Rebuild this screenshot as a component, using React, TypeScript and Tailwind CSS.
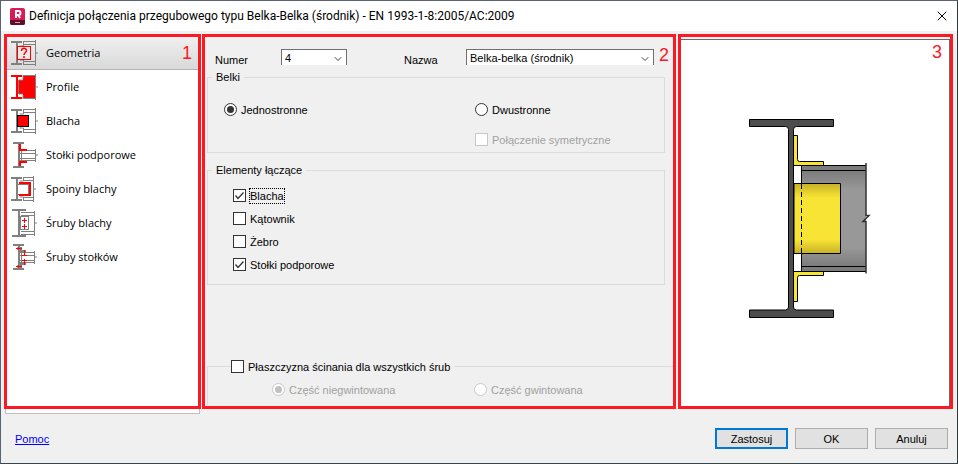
import React from "react";
import { ChevronDown, X } from "lucide-react";

const GRAY = "#808080";
const RED = "#ff0000";

type IconKind = "geometry" | "profile" | "plate" | "seats" | "welds" | "plateBolts" | "seatBolts";

const items: { label: string; icon: IconKind }[] = [
  { label: "Geometria", icon: "geometry" },
  { label: "Profile", icon: "profile" },
  { label: "Blacha", icon: "plate" },
  { label: "Stołki podporowe", icon: "seats" },
  { label: "Spoiny blachy", icon: "welds" },
  { label: "Śruby blachy", icon: "plateBolts" },
  { label: "Śruby stołków", icon: "seatBolts" },
];

// I-section of the supporting beam, seen from its end
const columnPaths: Record<IconKind, string> = {
  geometry: "M1 3h11M1 25h11M7 3v22",
  profile: "M1 3h11M1 25h11M7 3v22",
  plate: "M1 3h11M1 25h11M7 3v22",
  welds: "M1 3h11M1 25h11M7 3v22",
  plateBolts: "M2 1h14M2 27h14M9 1v26",
  seats: "M3 2h11M3 26h11M9 2v24",
  seatBolts: "M3 2h11M3 26h11M9 2v24",
};

// supported beam, seen from its side
const beamPaths: Record<IconKind, string> = {
  geometry: "M25.500 1v26M13 2.500h12M13 5.500h12M13 22.500h12M13 25.500h12M13.500 2v5h-4M13.500 26v-5h-4M26 14h2",
  profile: "M25.500 1v26M13 2.500h12M13 25.500h12M13 2v4M13 26v-4M9 7h4M9 21h4M8.500 7v14M26 14h2",
  plate: "M25.500 1v26M13 2.500h12M13 5.500h12M13 22.500h12M13 25.500h12M13.500 2v5h-4M13.500 26v-5h-4M26 14h2",
  welds: "M23.500 1v26M13 2.500h10M13 5.500h10M13 22.500h10M13 25.500h10M13.500 2v4h-4M13.500 26v-4h-4M24 14h2",
  plateBolts: "M24.500 2v25M11 3.500h13M11 6.500h13M11 22.500h13M11 25.500h13M25 14h2",
  seats: "M25.500 8v13M10 9.500h15M10 12.500h15M10 17.500h15M10 19.500h15M11.500 9v11M26 14h2",
  seatBolts: "M24.500 8v13M10 9.500h14M10 12.500h14M10 17.500h14M10 19.500h14M11.500 9v11M25 14h2",
};

const NavIcon: React.FC<{ kind: IconKind }> = ({ kind }) => (
  <svg width="28" height="28" viewBox="0 0 28 28" fill="none" aria-hidden="true">
    {kind === "profile" && <path d="M9 7h4V3h12v22H13v-4H9z" fill={RED} />}
    <path d={beamPaths[kind]} stroke={GRAY} />
    <path d={columnPaths[kind]} stroke={kind === "profile" ? RED : GRAY} strokeWidth="2" />
    {kind === "geometry" && (
      <>
        <rect x="7.500" y="7.500" width="13" height="13" fill="#e9e9e9" stroke={RED} />
        <path d="M11.500 12c0-3.500 5-3.500 5-.5 0 2-2.500 2-2.500 4.500M14 17v2" stroke={RED} strokeWidth="1.500" />
      </>
    )}
    {kind === "plate" && <rect x="7.500" y="8.500" width="11" height="11" fill={RED} stroke="#000" />}
    {kind === "seats" && <path d="M10 3v6h7M10 25v-4h7" stroke={RED} strokeWidth="2" />}
    {kind === "welds" && (
      <>
        <rect x="7.500" y="9.500" width="11" height="10" fill="#fff" stroke={GRAY} />
        <path d="M9 8h11v12H9" stroke={RED} strokeWidth="2" />
      </>
    )}
    {kind === "plateBolts" && (
      <>
        <rect x="10.500" y="7.500" width="8" height="13" fill="#fff" stroke={GRAY} />
        <path d="M12 11.500h5M14.500 9v5M12 17.500h5M14.500 15v5" stroke={RED} />
      </>
    )}
    {kind === "seatBolts" && (
      <>
        <path d="M11 4v4h5M11 25v-4h5" stroke={GRAY} strokeWidth="2" />
        <path d="M6 5.500h6M6 23.500h6M14.500 7v6M14.500 16v6M12 12.500h5M12 17.500h5M8 4v3M8 22v3" stroke={RED} />
      </>
    )}
  </svg>
);

const AppLogo: React.FC = () => (
  <svg width="15" height="17" viewBox="0 0 15 17" aria-hidden="true">
    <rect width="15" height="17" rx="2" fill="#d81b55" />
    <path d="M0 12h15v3a2 2 0 0 1-2 2H2a2 2 0 0 1-2-2z" fill="#5e0f2c" />
    <path d="M6 10V3h2.500a2 2 0 0 1 0 4H6M8 7l2 3" fill="none" stroke="#fff" strokeWidth="2" />
    <path d="M5 14.500h5" stroke="#d9a5b5" />
  </svg>
);

const JointDrawing: React.FC = () => (
  <svg width="124" height="204" viewBox="747 117 124 204" role="img" aria-label="Belka-belka (środnik)">
    <defs>
      <linearGradient id="beamWeb" x1="0" y1="0" x2="0" y2="1">
        <stop offset="0" stopColor="#7c7c7c" />
        <stop offset="0.2" stopColor="#989898" />
        <stop offset="0.8" stopColor="#989898" />
        <stop offset="1" stopColor="#7c7c7c" />
      </linearGradient>
      <linearGradient id="platePaint" x1="0" y1="0" x2="0" y2="1">
        <stop offset="0" stopColor="#c6b129" />
        <stop offset="0.2" stopColor="#f8e434" />
        <stop offset="0.8" stopColor="#f8e434" />
        <stop offset="1" stopColor="#c6b129" />
      </linearGradient>
    </defs>
    <path d="M801.500 165.500H866V271.500H801.500z" fill="#7c7c7c" />
    <path d="M801.500 170.500H866V266.500H801.500z" fill="url(#beamWeb)" />
    <path d="M801.500 165.500H866M801.500 170.500H866M801.500 266.500H866M801.500 271.500H866M801.500 165.500V271.500" stroke="#000" />
    <path d="M866 163V215.500h3l-6 6h3V273.500" fill="none" stroke="#333" strokeWidth="1.500" />
    <path d="M794 183.500h46.500v70H794z" fill="url(#platePaint)" stroke="#000" />
    <path d="M801.500 184V253" stroke="#000" strokeDasharray="5 3" />
    <g fill="#f8e434" stroke="#000">
      <path d="M793.500 135.500h4V159.500q0 2 2 2h24v4h-30z" />
      <path d="M793.500 301.500h4V277.500q0-2 2-2h24v-4h-30z" />
    </g>
    <path
      d="M749.500 119.500h84v7h-37q-3 0-3 3V307q0 3 3 3h37v7.500h-84V310h36q3 0 3-3V129.500q0-3-3-3h-36z"
      fill="#4d4d4d"
      stroke="#000"
    />
  </svg>
);

type ChoiceProps = {
  type: "radio" | "checkbox";
  label: string;
  name?: string;
  checked?: boolean;
  disabled?: boolean;
  focused?: boolean;
};

const Choice: React.FC<ChoiceProps> = ({ type, label, name, checked, disabled, focused }) => (
  <label className={`flex h-[23px] items-center gap-1 whitespace-nowrap ${disabled ? "text-[#a0a0a0]" : "text-black"}`}>
    <span className="relative size-[13px]">
      <input
        type={type}
        name={name}
        defaultChecked={checked}
        disabled={disabled}
        className={`peer block size-[13px] appearance-none border bg-white ${type === "radio" ? "rounded-full" : ""} ${
          disabled ? "border-[#c8c8c8]" : "border-[#333]"
        }`}
      />
      {type === "radio" ? (
        <span
          className={`pointer-events-none absolute inset-[3px] hidden rounded-full peer-checked:block ${
            disabled ? "bg-[#c0c0c0]" : "bg-[#333]"
          }`}
        />
      ) : (
        <svg viewBox="0 0 13 13" className="pointer-events-none absolute inset-0 hidden peer-checked:block" fill="none">
          <path d="M2.500 6.500 5 9.500 10.500 3.500" stroke="#333" strokeWidth="1.300" />
        </svg>
      )}
    </span>
    <span className={focused ? "outline-1 outline-dotted outline-black" : ""}>{label}</span>
  </label>
);

const Combo: React.FC<{ id: string; value: string; className: string }> = ({ id, value, className }) => (
  <div className={`relative h-4 ${className}`}>
    <select
      id={id}
      className="block h-4 w-full appearance-none border border-b-0 border-[#707070] bg-white pl-[3px] text-[11px] leading-4"
    >
      <option>{value}</option>
    </select>
    <ChevronDown size={12} strokeWidth={2} className="pointer-events-none absolute top-1 right-[3px] text-[#444]" />
  </div>
);

const Marker: React.FC<{ children: string; className: string }> = ({ children, className }) => (
  <span className={`absolute text-[18px] leading-5 text-[#fb1923] ${className}`}>{children}</span>
);

const dialogButton = "h-[21px] w-[73px] bg-[#e1e1e1] text-center";

const App: React.FC = () => {
  return (
    <div className="flex min-h-screen flex-col border border-t-[#5b6272] border-r-[#33383a] border-b-[#33474c] border-l-[#5b6272] bg-[#f0f0f0] font-['Liberation_Sans',sans-serif] text-[11px] leading-[14px] text-black">
      <header className="flex h-[30px] items-center bg-white pr-[7px] pl-[9px]">
        <AppLogo />
        <h1 className="ml-1 flex-1 font-['Roboto',sans-serif] text-[12px]">
          Definicja połączenia przegubowego typu Belka-Belka (środnik) - EN 1993-1-8:2005/AC:2009
        </h1>
        <button type="button" aria-label="Zamknij">
          <X size={16} strokeWidth={1.5} />
        </button>
      </header>

      <main className="flex flex-1 pt-[3px] pr-1 pl-[3px]">
        <div className="flex w-[197px] flex-col">
          <nav className="relative flex-1 border-[3px] border-[#fb1923] bg-white font-['Open_Sans',sans-serif] text-[11px]">
            <ul>
              {items.map((item, index) => (
                <li key={item.label}>
                  <a
                    href={`#${item.icon}`}
                    className={`flex items-center gap-2 pl-[3px] ${
                      index === 0 ? "h-[33px] border-b border-[#b4b4b4] bg-linear-to-b from-[#f0f0f0] to-[#d9d9d9]" : "h-[34px]"
                    }`}
                  >
                    <NavIcon kind={item.icon} />
                    {item.label}
                  </a>
                </li>
              ))}
            </ul>
            <Marker className="top-[6px] right-[6px] font-['Liberation_Sans',sans-serif]">1</Marker>
          </nav>
          <div className="mx-px h-[5px] border border-t-0 border-[#c0c0c0] bg-white" />
        </div>

        <section className="relative mb-[5px] ml-px flex flex-[466] flex-col border-[3px] border-[#fb1923] pt-3 pl-0.5">
          <div className="flex h-[21px] items-start pr-[19px] pl-2">
            <label htmlFor="number" className="w-[66px] pt-1">
              Numer
            </label>
            <Combo id="number" value="4" className="w-[66px]" />
            <label htmlFor="name" className="ml-[57px] w-[62px] pt-1">
              Nazwa
            </label>
            <Combo id="name" value="Belka-belka (środnik)" className="flex-1" />
          </div>

          <fieldset className="mr-2 h-[83px] border border-[#dcdcdc]">
            <legend className="ml-1 px-1">Belki</legend>
            <div className="grid grid-cols-[251px_1fr] gap-y-[7px] pt-[14px] pl-4">
              <Choice type="radio" name="sides" label="Jednostronne" checked />
              <Choice type="radio" name="sides" label="Dwustronne" />
              <div className="col-start-2">
                <Choice type="checkbox" label="Połączenie symetryczne" disabled />
              </div>
            </div>
          </fieldset>

          <fieldset className="mt-[10px] mr-2 h-[122px] border border-[#dcdcdc]">
            <legend className="ml-1 px-1">Elementy łączące</legend>
            <div className="pt-[7px] pl-[25px]">
              <Choice type="checkbox" label="Blacha" checked focused />
              <Choice type="checkbox" label="Kątownik" />
              <Choice type="checkbox" label="Żebro" />
              <Choice type="checkbox" label="Stołki podporowe" checked />
            </div>
          </fieldset>

          <fieldset className="mt-auto border border-r-0 border-b-0 border-[#dcdcdc]">
            <legend className="ml-[23px] pr-1">
              <Choice type="checkbox" label="Płaszczyzna ścinania dla wszystkich śrub" />
            </legend>
            <div className="grid grid-cols-[202px_1fr] pb-[5px] pl-16">
              <Choice type="radio" name="plane" label="Część niegwintowana" checked disabled />
              <Choice type="radio" name="plane" label="Część gwintowana" disabled />
            </div>
          </fieldset>
          <Marker className="top-2 right-1">2</Marker>
        </section>

        <section className="relative mb-[5px] ml-0.5 flex flex-[269] flex-col border-[3px] border-[#fb1923] pt-0.5">
          <div className="flex flex-1 items-start justify-center border-t border-r border-[#696969] bg-white pt-[77px] pr-3">
            <JointDrawing />
          </div>
          <Marker className="top-[5px] right-2">3</Marker>
        </section>
      </main>

      <footer className="flex h-[49px] items-center justify-between pr-[9px] pl-[14px]">
        <a href="#pomoc" className="text-[#0000ff] underline">
          Pomoc
        </a>
        <div className="flex gap-[7px]">
          <button type="button" className={`${dialogButton} border-2 border-[#0078d7]`}>
            Zastosuj
          </button>
          <button type="button" className={`${dialogButton} border border-[#adadad]`}>
            OK
          </button>
          <button type="button" className={`${dialogButton} border border-[#adadad]`}>
            Anuluj
          </button>
        </div>
      </footer>
    </div>
  );
};

export default App;
